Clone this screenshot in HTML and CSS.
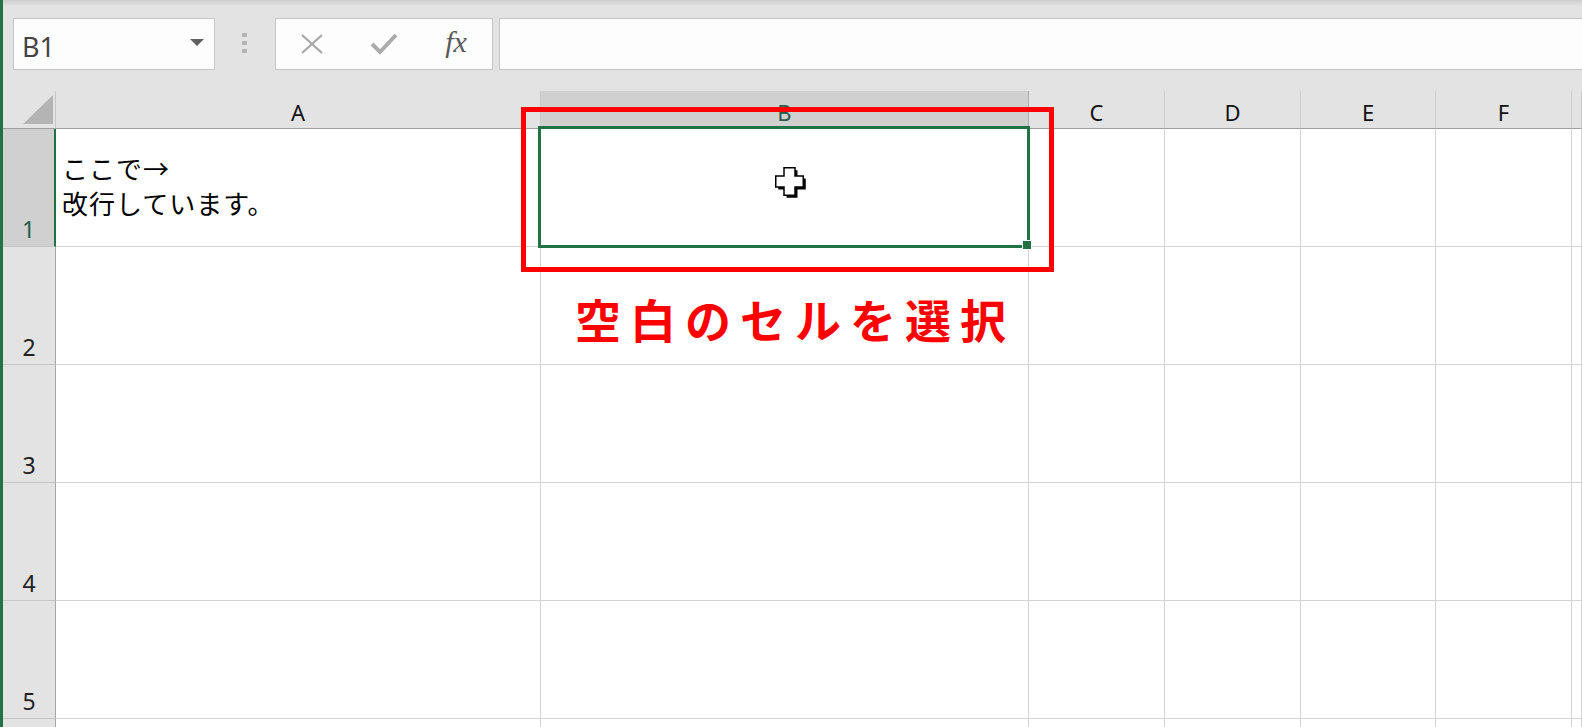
FILE: index.html
```html
<!DOCTYPE html>
<html lang="ja">
<head>
<meta charset="UTF-8">
<title>Book1 - Excel</title>
<link rel="stylesheet" href="styles.css">
</head>
<body>
<div class="window">
  <div class="edge"></div>
  <div class="main">

    <!-- name box + formula bar -->
    <div class="formula-bar">
      <div class="name-box">
        <span>B1</span>
        <span class="drop"></span>
      </div>
      <div class="grip"><i></i><i></i><i></i></div>
      <div class="fx-buttons">
        <span class="fx-btn">
          <svg width="24" height="22" viewBox="0 0 24 22"><path d="M2 2 L22 20 M22 2 L2 20" stroke="#a8a8a8" stroke-width="2.2" fill="none"/></svg>
        </span>
        <span class="fx-btn">
          <svg width="28" height="22" viewBox="0 0 28 22"><path d="M2 11 L10 19 L26 2" stroke="#ababab" stroke-width="4" fill="none"/></svg>
        </span>
        <span class="fx-btn fx">fx</span>
      </div>
      <div class="formula-input"></div>
    </div>

    <!-- worksheet -->
    <div class="sheet">
      <div class="corner"><span class="select-all"></span></div>
      <div class="col-head">A</div>
      <div class="col-head selected">B</div>
      <div class="col-head">C</div>
      <div class="col-head">D</div>
      <div class="col-head">E</div>
      <div class="col-head">F</div>
      <div class="col-head"></div>

      <div class="row-head selected">1</div>
      <div class="cell wrap"><span>ここで<span class="arrow">→</span></span><span>改行しています。</span></div>
      <div class="cell active"><span class="selection"><span class="fill-handle"></span></span></div>
      <div class="cell"></div><div class="cell"></div><div class="cell"></div><div class="cell"></div><div class="cell"></div>

      <div class="row-head">2</div>
      <div class="cell"></div><div class="cell"></div><div class="cell"></div><div class="cell"></div><div class="cell"></div><div class="cell"></div><div class="cell"></div>

      <div class="row-head">3</div>
      <div class="cell"></div><div class="cell"></div><div class="cell"></div><div class="cell"></div><div class="cell"></div><div class="cell"></div><div class="cell"></div>

      <div class="row-head">4</div>
      <div class="cell"></div><div class="cell"></div><div class="cell"></div><div class="cell"></div><div class="cell"></div><div class="cell"></div><div class="cell"></div>

      <div class="row-head">5</div>
      <div class="cell"></div><div class="cell"></div><div class="cell"></div><div class="cell"></div><div class="cell"></div><div class="cell"></div><div class="cell"></div>

      <div class="row-head"></div>
      <div class="cell"></div><div class="cell"></div><div class="cell"></div><div class="cell"></div><div class="cell"></div><div class="cell"></div><div class="cell"></div>

      <!-- callout drawn over the sheet -->
      <div class="callout"></div>
      <p class="callout-text">空白のセルを選択</p>
      <svg class="cursor" width="33" height="33" viewBox="0 0 33 33">
        <path d="M9 0.75 H20 V9 H28.25 V20 H20 V28.25 H9 V20 H0.75 V9 H9 Z" transform="translate(2.5 2.5)" fill="#000"/>
        <path d="M9 0.75 H20 V9 H28.25 V20 H20 V28.25 H9 V20 H0.75 V9 H9 Z" fill="#fff" stroke="#000" stroke-width="1.5"/>
      </svg>
    </div>

  </div>
</div>
</body>
</html>
```

FILE: styles.css
```css
* {
	margin: 0;
	padding: 0;
	box-sizing: border-box;
}

body {
	width: 1582px;
	height: 727px;
	overflow: hidden;
	background: #fff;
	font-family: "Noto Sans", "Noto Sans CJK JP", sans-serif;
}

.window {
	display: flex;
	height: 727px;
}

.edge {
	flex: none;
	width: 3px;
	background: #217346;
}

.main {
	flex: 1;
	min-width: 0;
	overflow: hidden;
}

/* formula bar */
.formula-bar {
	height: 91px;
	display: flex;
	align-items: flex-start;
	padding: 18px 0 0 10px;
	background: linear-gradient(#cdcdcd 0, #e3e3e3 6px, #e3e3e3 100%);
}

.name-box {
	flex: none;
	width: 202px;
	height: 52px;
	display: flex;
	align-items: center;
	justify-content: space-between;
	padding: 4px 10px 0 8px;
	background: #fdfdfd;
	border: 1px solid #c6c6c6;
	font-size: 27px;
	color: #444;
}

.drop {
	width: 0;
	height: 0;
	margin-bottom: 8px;
	border-left: 7px solid transparent;
	border-right: 7px solid transparent;
	border-top: 7px solid #606060;
}

.grip {
	flex: none;
	display: flex;
	flex-direction: column;
	gap: 4px;
	margin: 15px 28px 0 27px;
}

.grip i {
	display: block;
	width: 5px;
	height: 4px;
	background: #b4b4b4;
}

.fx-buttons {
	flex: none;
	width: 218px;
	height: 52px;
	display: flex;
	background: #fdfdfd;
	border: 1px solid #c6c6c6;
}

.fx-btn {
	flex: 1;
	display: flex;
	align-items: center;
	justify-content: center;
}

.fx {
	font-family: "Liberation Serif", serif;
	font-style: italic;
	font-size: 30px;
	color: #5a5a5a;
	padding-bottom: 4px;
}

.formula-input {
	flex: 1;
	height: 52px;
	margin-left: 6px;
	margin-right: -4px;
	background: #fdfdfd;
	border: 1px solid #c6c6c6;
}

/* grid */
.sheet {
	position: relative;
	display: grid;
	grid-template-columns: 53px 485px 488px 136px 136px 135px 136px 1fr;
	grid-template-rows: 38px repeat(6, 118px);
}

.corner {
	display: flex;
	align-items: flex-end;
	justify-content: flex-end;
	padding: 0 2px 4px 0;
	background: #e3e3e3;
	border-right: 1px solid #c6c6c6;
	border-bottom: 1px solid #9f9f9f;
}

.select-all {
	width: 0;
	height: 0;
	border-left: 30px solid transparent;
	border-bottom: 29px solid #b4b4b4;
}

.col-head {
	display: flex;
	align-items: flex-end;
	justify-content: center;
	padding-bottom: 5px;
	background: #e3e3e3;
	border-right: 1px solid #cbcbcb;
	border-bottom: 1px solid #9f9f9f;
	font-size: 22px;
	line-height: 22px;
	color: #111;
}

.col-head.selected {
	background: #d0d0d0;
	color: #285d4b;
	border-right-color: #ababab;
}

.row-head {
	display: flex;
	align-items: flex-end;
	justify-content: center;
	padding-bottom: 5px;
	background: #e3e3e3;
	border-right: 1px solid #a6a6a6;
	border-bottom: 1px solid #c6c6c6;
	font-size: 23px;
	line-height: 23px;
	color: #222;
}

.row-head.selected {
	background: #d0d0d0;
	color: #285d4b;
	border-right: 2px solid #217346;
}

.cell {
	background: #fff;
	border-right: 1px solid #d4d4d4;
	border-bottom: 1px solid #d4d4d4;
}

.cell.wrap {
	display: flex;
	flex-direction: column;
	justify-content: flex-end;
	padding: 0 0 26px 6px;
	font-family: "Noto Sans CJK JP", sans-serif;
	font-size: 26px;
	line-height: 35px;
	letter-spacing: 1px;
	color: #000;
}

.arrow {
	font-variant-east-asian: full-width;
}

.cell.active {
	position: relative;
}

.selection {
	position: absolute;
	top: -3px;
	left: -3px;
	right: -2px;
	bottom: -2px;
	border: 3px solid #217346;
	z-index: 2;
}

.fill-handle {
	position: absolute;
	right: -5px;
	bottom: -5px;
	width: 10px;
	height: 10px;
	background: #217346;
	border: 1px solid #fff;
}

/* red note on top of the sheet */
.callout {
	position: absolute;
	left: 518px;
	top: 16px;
	width: 533px;
	height: 165px;
	border: 5px solid #ff0000;
	z-index: 3;
}

.callout-text {
	position: absolute;
	left: 572px;
	top: 204px;
	font-family: "Noto Sans CJK JP", sans-serif;
	font-weight: 700;
	font-size: 46px;
	line-height: 46px;
	letter-spacing: 9px;
	color: #ff0000;
	white-space: nowrap;
	z-index: 3;
}

.cursor {
	position: absolute;
	left: 772px;
	top: 76px;
	z-index: 4;
}
```
